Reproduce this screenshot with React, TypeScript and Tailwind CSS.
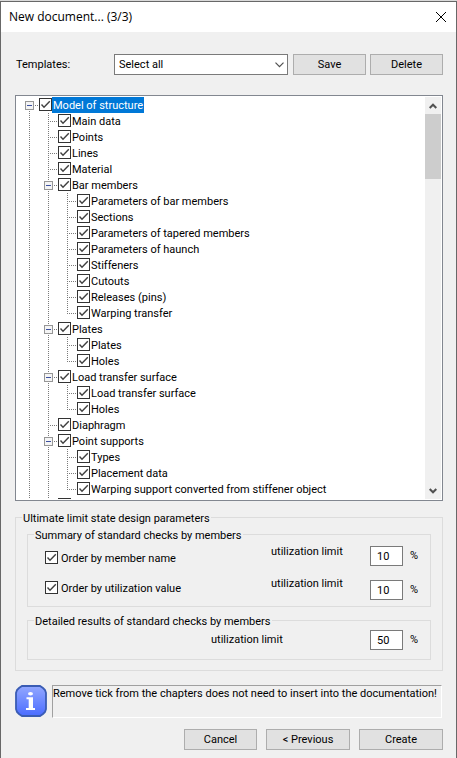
import { ReactNode, useState } from "react";

type Guide = "through" | "tee" | "end";

type Chapter = {
  label: string;
  level: 0 | 1 | 2;
  expandable?: boolean;
  last?: boolean;
};

const chapters: Chapter[] = [
  { label: "Model of structure", level: 0, expandable: true },
  { label: "Main data", level: 1 },
  { label: "Points", level: 1 },
  { label: "Lines", level: 1 },
  { label: "Material", level: 1 },
  { label: "Bar members", level: 1, expandable: true },
  { label: "Parameters of bar members", level: 2 },
  { label: "Sections", level: 2 },
  { label: "Parameters of tapered members", level: 2 },
  { label: "Parameters of haunch", level: 2 },
  { label: "Stiffeners", level: 2 },
  { label: "Cutouts", level: 2 },
  { label: "Releases (pins)", level: 2 },
  { label: "Warping transfer", level: 2, last: true },
  { label: "Plates", level: 1, expandable: true },
  { label: "Plates", level: 2 },
  { label: "Holes", level: 2, last: true },
  { label: "Load transfer surface", level: 1, expandable: true },
  { label: "Load transfer surface", level: 2 },
  { label: "Holes", level: 2, last: true },
  { label: "Diaphragm", level: 1 },
  { label: "Point supports", level: 1, expandable: true },
  { label: "Types", level: 2 },
  { label: "Placement data", level: 2 },
  { label: "Warping support converted from stiffener object", level: 2, last: true },
  { label: "", level: 1 },
];

function GuideCell({ kind }: { kind: Guide }) {
  return (
    <svg width="19" height="16" className="shrink-0" stroke="#7a7a7a" shapeRendering="crispEdges" aria-hidden="true">
      <path d={kind === "end" ? "M9.5 0V9" : "M9.5 0V16"} strokeDasharray="1 1" />
      {kind !== "through" && <path d="M11 8.5H19" strokeDasharray="1 1" />}
    </svg>
  );
}

function Expander({ root, label }: { root: boolean; label: string }) {
  return (
    <button type="button" aria-label={"Collapse " + label} className="h-4 w-[19px] shrink-0">
      <svg width="19" height="16" fill="none" stroke="#7a7a7a" shapeRendering="crispEdges">
        {!root && <path d="M9.5 0V4" strokeDasharray="1 1" />}
        <path d="M9.5 14V16M15 8.5H19" strokeDasharray="1 1" />
        <rect x="5.5" y="4.5" width="8" height="8" fill="#f4f4f4" stroke="#969696" />
        <path d="M7 8.5H12" stroke="#3c50a0" />
      </svg>
    </button>
  );
}

function Tick({ id, children, labelClass }: { id: string; children?: ReactNode; labelClass: string }) {
  const [on, setOn] = useState(true);
  return (
    <>
      <span className="mt-px grid size-[13px] shrink-0">
        <input
          id={id}
          type="checkbox"
          aria-label={children ? undefined : "Chapter"}
          checked={on}
          onChange={() => setOn(!on)}
          className="col-start-1 row-start-1 m-0 size-[13px] appearance-none border border-[#333] bg-white"
        />
        {on && (
          <svg width="13" height="13" fill="none" stroke="#404040" strokeWidth="1.4" className="pointer-events-none col-start-1 row-start-1">
            <path d="M2.5 6.5L5 9.2L10.8 3.2" />
          </svg>
        )}
      </span>
      {children && (
        <label htmlFor={id} className={labelClass}>
          {children}
        </label>
      )}
    </>
  );
}

function ChapterRow({ chapter, index }: { chapter: Chapter; index: number }) {
  const { label, level, expandable, last } = chapter;
  const own = expandable ? <Expander root={level === 0} label={label} /> : <GuideCell kind={last ? "end" : "tee"} />;
  return (
    <li className="flex h-4 items-start">
      {level > 0 && <GuideCell kind="through" />}
      {level > 1 && <GuideCell kind="through" />}
      {own}
      <Tick
        id={"chapter-" + index}
        labelClass={
          level === 0
            ? "h-4 bg-[#0078d7] pt-px pr-px pl-px leading-4 whitespace-nowrap text-white"
            : "h-4 pt-px pl-px leading-4 whitespace-nowrap"
        }
      >
        {label}
      </Tick>
    </li>
  );
}

function PushButton({ children, className }: { children: ReactNode; className: string }) {
  return (
    <button type="button" className={"h-[21px] border border-[#adadad] bg-[#e1e1e1] leading-4 " + className}>
      {children}
    </button>
  );
}

function LimitBox({ id, value }: { id: string; value: string }) {
  return (
    <div className="flex items-start">
      <input id={id} defaultValue={value} className="h-5 w-[33px] border border-[#7a7a7a] bg-white pl-[6px]" />
      <span className="w-[27px] pt-[2px] pl-[7px]">%</span>
    </div>
  );
}

export default function App() {
  return (
    <main className="border-t border-[#d9d9d9] font-['Roboto','Open_Sans',sans-serif] text-[11px] leading-4 text-black">
      <div className="border-x border-t border-[#686868] bg-[#f0f0f0]">
        <header className="flex h-[30px] items-center justify-between bg-white pr-[9px] pl-2">
          <h1 className="font-['Open_Sans','Noto_Sans',sans-serif] text-[12px]">New document... (3/3)</h1>
          <button type="button" aria-label="Close">
            <svg width="12" height="12" stroke="#000" fill="none">
              <path d="M1 1L11 11M11 1L1 11" />
            </svg>
          </button>
        </header>

        <div className="pt-[22px] pr-[13px] pb-2 pl-[14px]">
          <div className="flex items-center">
            <label htmlFor="templates" className="w-[99px] pl-px">
              Templates:
            </label>
            <div className="grid min-w-0 flex-1">
              <select
                id="templates"
                className="col-start-1 row-start-1 h-[21px] w-full appearance-none border border-[#7a7a7a] bg-white pl-1"
              >
                <option>Select all</option>
              </select>
              <svg width="9" height="6" fill="none" stroke="#505050" strokeWidth="1.2" className="pointer-events-none col-start-1 row-start-1 mr-1 self-center justify-self-end">
                <path d="M0.5 0.7L4.5 4.7L8.5 0.7" />
              </svg>
            </div>
            <PushButton className="ml-[5px] w-[73px]">Save</PushButton>
            <PushButton className="ml-1 w-[73px]">Delete</PushButton>
          </div>

          <div className="mt-5 flex h-[406px] border border-[#828790] bg-white p-px">
            <ul className="min-w-0 flex-1 overflow-hidden pl-[3px]">
              {chapters.map((chapter, index) => (
                <ChapterRow key={index} chapter={chapter} index={index} />
              ))}
            </ul>
            <div className="flex w-4 flex-col bg-[#f0f0f0]">
              <button type="button" aria-label="Scroll up" className="flex h-[17px] items-center justify-center">
                <svg width="8" height="6" fill="none" stroke="#505050" strokeWidth="2">
                  <path d="M0.7 5L4 1.7L7.3 5" />
                </svg>
              </button>
              <div className="h-[65px] bg-[#cdcdcd]" />
              <button type="button" aria-label="Scroll down" className="mt-auto flex h-[17px] items-center justify-center">
                <svg width="8" height="6" fill="none" stroke="#505050" strokeWidth="2">
                  <path d="M0.7 1L4 4.3L7.3 1" />
                </svg>
              </button>
            </div>
          </div>

          <fieldset className="mt-[9px] border border-[#dcdcdc] px-[11px] pt-[2px] pb-[10px]">
            <legend className="-ml-[5px] h-[15px] px-px leading-[17px]">Ultimate limit state design parameters</legend>

            <fieldset className="border border-[#dcdcdc] pb-[6px] pl-[17px]">
              <legend className="-ml-[11px] h-[15px] px-px leading-[17px]">Summary of standard checks by members</legend>
              <div className="flex pt-1">
                <div className="flex flex-1 flex-col gap-[14px] pt-1">
                  <div className="flex h-4 items-start">
                    <Tick id="order-name" labelClass="pt-px pl-[3px]">Order by member name</Tick>
                  </div>
                  <div className="flex h-4 items-start">
                    <Tick id="order-value" labelClass="pt-px pl-[3px]">Order by utilization value</Tick>
                  </div>
                </div>
                <div className="-mt-[2px] flex w-[99px] flex-col gap-4">
                  <label htmlFor="limit-name">utilization limit</label>
                  <label htmlFor="limit-value">utilization limit</label>
                </div>
                <div className="flex flex-col gap-[14px]">
                  <LimitBox id="limit-name" value="10" />
                  <LimitBox id="limit-value" value="10" />
                </div>
              </div>
            </fieldset>

            <fieldset className="mt-[6px] border border-[#dcdcdc] pb-[9px] pl-[17px]">
              <legend className="-ml-[11px] h-[15px] px-px leading-[17px]">Detailed results of standard checks by members</legend>
              <div className="flex items-start justify-end pt-[2px]">
                <label htmlFor="limit-detail" className="w-[159px] pt-[2px]">
                  utilization limit
                </label>
                <LimitBox id="limit-detail" value="50" />
              </div>
            </fieldset>
          </fieldset>

          <div className="mt-[14px] flex items-start gap-[5px] pr-px">
            <svg width="32" height="32" viewBox="0 0 32 32" className="shrink-0" role="img" aria-label="Information">
              <defs>
                <linearGradient id="info" x1="0" y1="0" x2="0" y2="1">
                  <stop offset="0" stopColor="#93a8ff" />
                  <stop offset="1" stopColor="#4a6cff" />
                </linearGradient>
              </defs>
              <path
                d="M7 1H25L28 3L30 5L31 8V24L30 27L28 29L25 31H7L4 29L2 27L1 24V8L2 5L4 3Z"
                fill="url(#info)"
                stroke="#3a5cb4"
                strokeWidth="1.8"
              />
              <ellipse cx="15.5" cy="8.7" rx="2.5" ry="1.7" fill="#fff" />
              <path d="M11.5 12.3H18V23H20V25H11V23H13.7V14.3H11.5Z" fill="#fff" />
            </svg>
            <p className="h-[33px] min-w-0 flex-1 border border-t-[#a0a0a0] border-r-white border-b-white border-l-[#a0a0a0]">
              Remove tick from the chapters does not need to insert into the documentation!
            </p>
          </div>

          <div className="mt-[11px] flex justify-end gap-[9px]">
            <PushButton className="w-[73px]">Cancel</PushButton>
            <PushButton className="w-[84px]">&lt; Previous</PushButton>
            <PushButton className="w-[84px]">Create</PushButton>
          </div>
        </div>
      </div>
    </main>
  );
}
